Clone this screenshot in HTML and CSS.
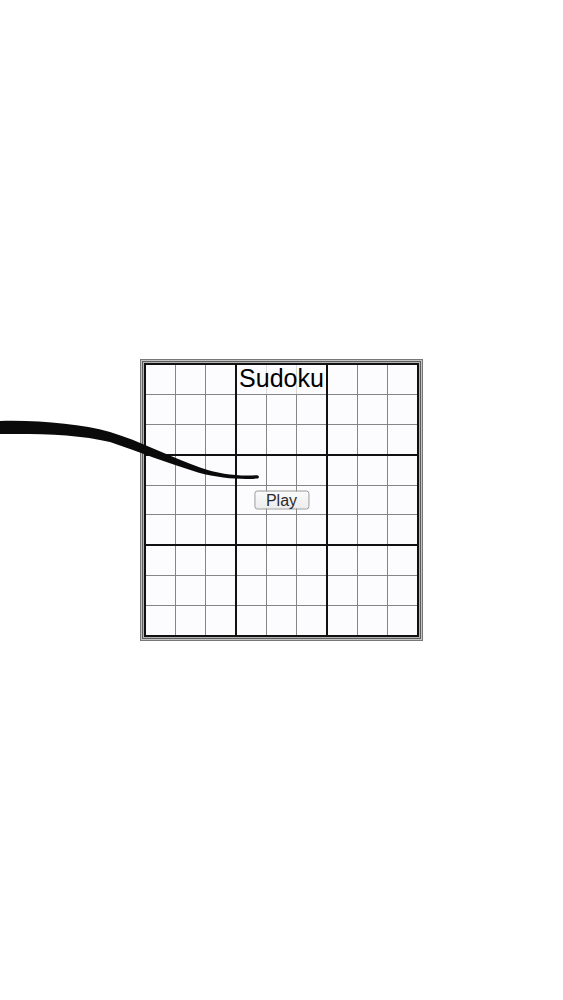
FILE: index.html
```html
<!DOCTYPE html>
<html lang="en">
<head>
<meta charset="utf-8">
<title>Sudoku</title>
<link rel="stylesheet" href="styles.css">
</head>
<body>
<main class="stage">
  <div class="board">
    <div class="grid">
      <div class="box"><i></i><i></i><i></i><i></i><i></i><i></i><i></i><i></i><i></i></div>
      <div class="box"><i></i><i></i><i></i><i></i><i></i><i></i><i></i><i></i><i></i></div>
      <div class="box"><i></i><i></i><i></i><i></i><i></i><i></i><i></i><i></i><i></i></div>
      <div class="box"><i></i><i></i><i></i><i></i><i></i><i></i><i></i><i></i><i></i></div>
      <div class="box"><i></i><i></i><i></i><i></i><i></i><i></i><i></i><i></i><i></i></div>
      <div class="box"><i></i><i></i><i></i><i></i><i></i><i></i><i></i><i></i><i></i></div>
      <div class="box"><i></i><i></i><i></i><i></i><i></i><i></i><i></i><i></i><i></i></div>
      <div class="box"><i></i><i></i><i></i><i></i><i></i><i></i><i></i><i></i><i></i></div>
      <div class="box"><i></i><i></i><i></i><i></i><i></i><i></i><i></i><i></i><i></i></div>
    </div>
    <h1 class="title">Sudoku</h1>
    <button class="play" type="button">Play</button>
  </div>
</main>
<svg class="stroke" width="563" height="1000" viewBox="0 0 563 1000" aria-hidden="true">
  <path d="M0,421 C40,420 80,424 110,432 C140,441 170,457 200,467.5 C220,474.5 240,476.5 257,475.2 C259.5,475.2 259.5,478.6 257,478.6 C240,479.5 220,478.5 198,472.5 C168,463 140,452.5 110,442 C80,434.5 40,433.5 0,434 Z" fill="#0a0a0a"/>
</svg>
</body>
</html>
```
FILE: styles.css
```css
html, body {
  margin: 0;
  padding: 0;
  background: #ffffff;
}

.stage {
  width: 563px;
  height: 1000px;
  display: flex;
  align-items: center;
  justify-content: center;
}

.board {
  position: relative;
  box-shadow: 0 0 0 1px #b4b4b4, 0 0 0 2px #5c5c5c, 0 0 0 3px #c4c4c4, 0 0 0 4px #777777;
}

.grid {
  box-sizing: border-box;
  width: 275px;
  height: 274px;
  border: 2px solid #111111;
  background: #111111;
  display: grid;
  grid-template-columns: repeat(3, 1fr);
  grid-template-rows: repeat(3, 1fr);
  gap: 2px;
}

.box {
  display: grid;
  grid-template-columns: repeat(3, 1fr);
  grid-template-rows: repeat(3, 1fr);
  gap: 1px;
  background: #858585;
}

.box i {
  display: block;
  background: #fcfbfe;
}

.title {
  position: absolute;
  top: 2px;
  left: 93px;
  width: 89px;
  height: 29px;
  margin: 0;
  background: rgba(252, 251, 254, 0.7);
  font-family: "Liberation Sans", Arial, sans-serif;
  font-weight: normal;
  font-size: 25px;
  line-height: 26px;
  text-align: center;
  color: #000000;
}

.play {
  position: absolute;
  left: 50%;
  top: 50%;
  transform: translate(-50%, -50%);
  margin: 0;
  padding: 0 11px;
  height: 19px;
  border: 1px solid #9a9a9a;
  border-radius: 3px;
  background: linear-gradient(#fbfbfb, #ececec);
  font-family: "Liberation Sans", Arial, sans-serif;
  font-size: 16px;
  line-height: 17px;
  color: #2a2a2a;
}

.stroke {
  position: absolute;
  left: 0;
  top: 0;
  pointer-events: none;
}
```
